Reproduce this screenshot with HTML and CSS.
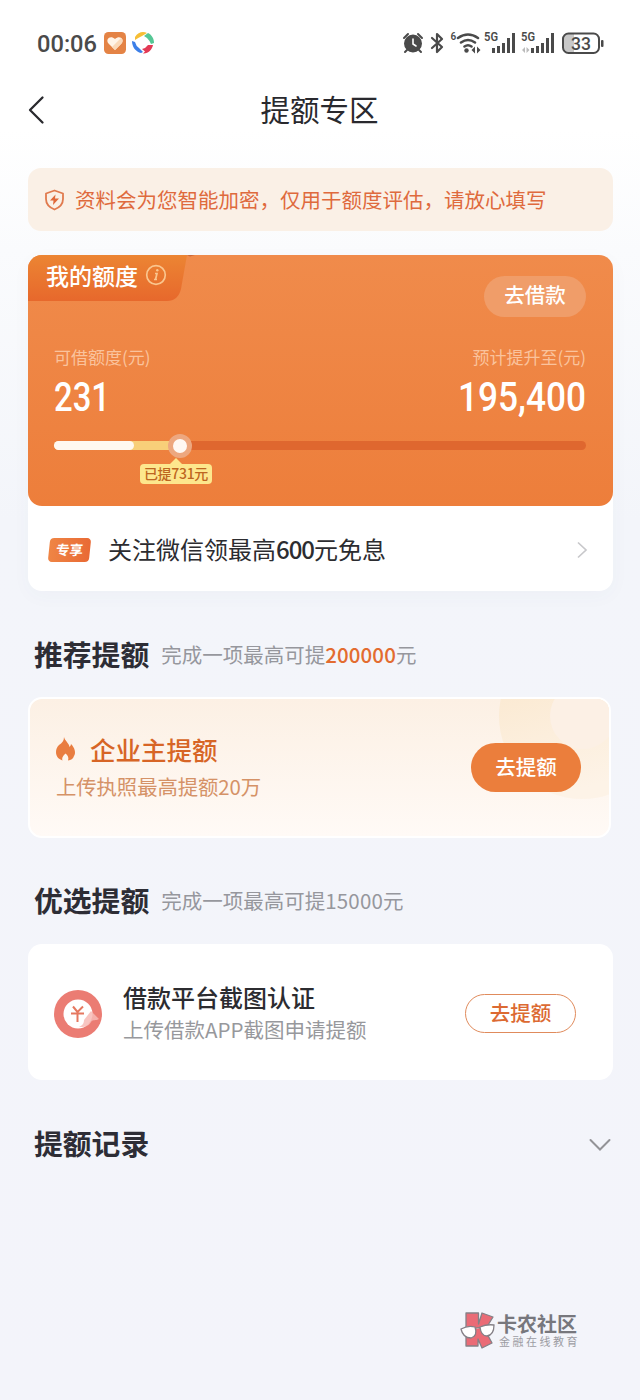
FILE: index.html
```html
<!DOCTYPE html>
<html lang="zh-CN">
<head>
<meta charset="utf-8">
<title>提额专区</title>
<link rel="stylesheet" href="styles.css">
</head>
<body>
<div class="page">
  <div class="status">
    <span class="clock"><svg width="62" height="30"><text x="0" y="24" textLength="60" lengthAdjust="spacingAndGlyphs">00:06</text></svg></span>
    <svg class="app-heart" width="22" height="22" viewBox="0 0 22 22"><rect width="22" height="22" rx="4.5" fill="#e48345"/><path d="M11 18 4.500 11.500C1 7 6.500 2.500 11 7c4.500-4.500 10 0 6.500 4.500z" fill="#fff4e7"/><path d="M11 18 8 15l9-9c2 1 2 4 .5 5.500z" fill="#fbd9b8"/></svg>
    <svg class="app-ring" width="24" height="24" viewBox="0 0 24 24"><path d="M4 6C7 1 12 0 16 2L11 5Q7 7 4 9z" fill="#f6be35"/><path d="M17 2c4 2 6 6 6 10l-3 1q-1-3-4-6l-3-2z" fill="#55c795"/><path d="M1 10l3 1q1 4 4 6l4 4-2 1C5 21 1 16 1 10z" fill="#3c7fe8"/><path d="M11 18q4-1 6-4l5 0c-1 5-5 9-10 8.500l2-2z" fill="#e33a55"/></svg>
    <svg class="sysicons" width="204" height="26" viewBox="0 0 204 26">
      <g fill="none" stroke="#4a4a4a" stroke-width="2" stroke-linecap="round">
        <circle cx="11" cy="13.500" r="8" fill="#4a4a4a"/><path d="M2 8l4-4M20 8l-4-4M5 20l-2 2M17 20l2 2"/>
        <path d="M11 9v5l3 2" stroke="#fff" stroke-width="1.600"/>
        <path d="M30 8l10 9-5 5V4l5 5-10 9" stroke-width="2.200" stroke-linejoin="round"/>
        <path d="M56 8q10-7 20 0M59 12.500q7-5 14 0M62.500 16.500q3.500-2.500 7 0" stroke-width="2.500"/>
      </g>
      <g fill="#4a4a4a">
        <circle cx="64.500" cy="20.500" r="2.200"/><path d="M73 16.500v7l-3.500-3.500zM75 16.500v7l3.500-3.500z"/>
        <path d="M90 18h3v5h-3zM95 16h3v7h-3zM100 13h3v10h-3zM105 8h3v15h-3zM110 3h3v20h-3z"/>
        <path d="M129 18h3v5h-3zM134 16h3v7h-3zM139 13h3v10h-3zM144 8h3v15h-3zM149 3h3v20h-3z"/>
        <path d="M123 17v6l-3-3zM124.500 17v6l3-3z" fill="#bbb"/>
        <rect x="199" y="10" width="2.500" height="7" rx="1"/>
      </g>
      <path d="M167 4h5v19h-5q-5 0-5-5V9q0-5 5-5z" fill="#c8c8c8"/>
      <rect x="161" y="3.500" width="36" height="19.500" rx="5.500" fill="none" stroke="#4a4a4a" stroke-width="2"/>
      <g class="sys-text"><text x="48.500" y="10" font-size="10">6</text><text x="82" y="11" font-size="12" textLength="14" lengthAdjust="spacingAndGlyphs">5G</text><text x="119" y="11" font-size="12" textLength="14" lengthAdjust="spacingAndGlyphs">5G</text><text x="169" y="19.500" font-size="18" font-weight="500" textLength="20" lengthAdjust="spacingAndGlyphs">33</text></g>
    </svg>
  </div>

  <header class="nav">
    <svg class="back" width="18" height="30" viewBox="0 0 18 30"><path d="M14.500 2.500 2 15 14.500 27.500" fill="none" stroke="#2a2a2e" stroke-width="2.300" stroke-linecap="round" stroke-linejoin="round"/></svg>
    <h1>提额专区</h1>
  </header>

  <div class="notice">
    <svg width="21" height="22" viewBox="0 0 21 22"><path d="M10.500 1.500 19 4.500V10c0 5-3.500 8.500-8.500 10.500C5.500 18.500 2 15 2 10V4.500z" fill="none" stroke="#e07a4e" stroke-width="1.800" stroke-linejoin="round"/><path d="M11.500 5.500 6 11.500h3.500L9 16l6-6.500h-4z" fill="#e0693a"/></svg>
    <span>资料会为您智能加密，仅用于额度评估，请放心填写</span>
  </div>

  <section class="quota">
    <div class="quota-card">
      <svg class="tab-shape" width="168" height="46" viewBox="0 0 168 46"><defs><linearGradient id="tab" x2="0" y2="1"><stop stop-color="#ec8533"/><stop offset="1" stop-color="#e7682c"/></linearGradient></defs><path d="M0 0H160L154 34Q151 46 140 46H0z" fill="url(#tab)"/><path d="M160 0h8l-5 1.500z" fill="#cd6836"/></svg>
      <div class="tab-label">我的额度
        <svg width="22" height="22" viewBox="0 0 22 22"><circle cx="11" cy="11" r="9.300" fill="none" stroke="#fac68e" stroke-width="1.700"/><path d="M10 9.500h2l-1.500 6M9 15.500h3" fill="none" stroke="#fac68e" stroke-width="1.700"/><circle cx="12.300" cy="6.300" r="1.200" fill="#fac68e"/></svg>
      </div>
      <div class="borrow">去借款</div>
      <div class="amounts">
        <div><p>可借额度(元)</p><svg width="60" height="52"><text x="0" y="41" textLength="56" lengthAdjust="spacingAndGlyphs">231</text></svg></div>
        <div class="right"><p>预计提升至(元)</p><svg width="130" height="52"><text x="2" y="41" textLength="128" lengthAdjust="spacingAndGlyphs">195,400</text></svg></div>
      </div>
      <div class="track"><div class="raised"></div><div class="base"></div><div class="thumb"></div><div class="tip">已提731元</div></div>
    </div>
    <div class="wechat">
      <span class="tag"><b>专享</b></span>
      <span class="wechat-text">关注微信领最高<i>600</i>元免息</span>
      <svg width="12" height="18" viewBox="0 0 12 18"><path d="M2 1.500 10 9l-8 7.500" fill="none" stroke="#c8c8cb" stroke-width="1.700"/></svg>
    </div>
  </section>

  <div class="heading"><h2>推荐提额</h2><p>完成一项最高可提<em>200000</em>元</p></div>

  <section class="owner">
    <svg class="rings" width="112" height="101" viewBox="0 0 112 101"><defs><linearGradient id="ring" x2="0.300" y2="1"><stop stop-color="#fae5c8"/><stop offset="1" stop-color="#fdf3e7"/></linearGradient></defs><circle cx="83" cy="17" r="83" fill="url(#ring)"/><circle cx="84" cy="17" r="33" fill="#fcf0e5"/></svg>
    <div class="owner-text">
      <div class="owner-title">
        <svg width="22" height="24" viewBox="0 0 22 24"><path d="M9 0c1 4 5 6 5.500 10 1-1 1.500-2 1.500-3 4 4 5 9 3 12-1 3-3 4-6 4.500 1-3 0-5-2.500-7-2 2-4 4-3 7C3 22 1 19 1 15c0-3 1-5 3-7C7 6 9 4 9 0z" fill="#e97d40"/></svg>
        <span>企业主提额</span>
      </div>
      <p>上传执照最高提额20万</p>
    </div>
    <div class="btn-solid">去提额</div>
  </section>

  <div class="heading heading-b"><h2>优选提额</h2><p>完成一项最高可提<i>15000</i>元</p></div>

  <section class="platform">
    <svg width="50" height="50" viewBox="0 0 50 50"><circle cx="25" cy="25" r="24" fill="#eb7c73"/><circle cx="25" cy="25" r="14.500" fill="#fff"/><path d="M20 17.500l4.500 5.500 5.500-5.500M18 24.500h13M24.500 23v10" fill="none" stroke="#e57860" stroke-width="2"/><path d="M31 31l7-9 8 8c-3 2-6 0-8 3-3 5-7 5-12 5 4-2 5-4 5-7z" fill="#f7bbb6" opacity=".85"/></svg>
    <div class="platform-text"><h3>借款平台截图认证</h3><p>上传借款APP截图申请提额</p></div>
    <div class="btn-line">去提额</div>
  </section>

  <div class="record"><h2>提额记录</h2><svg width="22" height="14" viewBox="0 0 22 14"><path d="M1.500 2 11 11.500 20.500 2" fill="none" stroke="#939397" stroke-width="2" stroke-linecap="round"/></svg></div>

  <footer class="brand">
    <svg width="36" height="37" viewBox="0 0 36 37"><path d="M6 1h12.500v11L22 1l11 4-8 13 7 13-10 5-4-9v7H6z" fill="#ea6b76" stroke="#858087" stroke-width="1.300" stroke-linejoin="round"/><path d="M1 17q7-4 14-2 3 9-4 11-8 0-10-9zM20 15q7-3 14-2 0 10-7 11-6 0-7-9zM15 17q2-2 5-1" fill="#fff" stroke="#858087" stroke-width="1.300"/></svg>
    <div class="brand-text"><b>卡农社区</b><span>金融在线教育</span></div>
  </footer>
</div>
</body>
</html>
```
FILE: styles.css
```css
* { box-sizing: border-box; }
body, h1, h2, h3, p { margin: 0; }
body { font-family: "Noto Sans CJK SC", sans-serif; color: #2d2d35; }
svg { display: block; flex-shrink: 0; }
i, em { font-style: normal; }
.page {
  height: 1400px;
  overflow: hidden;
  padding: 0 27px 0 28px;
  background: linear-gradient(#fff 0, #fff 130px, #fafbfd 250px, #f3f5fa 520px, #f3f4fa 100%);
  display: flex;
  flex-direction: column;
}
.status { height: 86px; display: flex; align-items: center; padding-left: 9px; flex-shrink: 0; }
.clock text { font: 500 23.5px Roboto, sans-serif; fill: #4a4a4a; }
.app-heart { margin-left: 5px; }
.app-ring { margin-left: 5px; }
.sysicons { margin-left: auto; margin-right: 7px; }
.sys-text { font-family: Roboto, sans-serif; font-weight: 600; fill: #4a4a4a; }

.nav { height: 46px; display: grid; grid-template-columns: 18px 1fr 18px; align-items: center; flex-shrink: 0; }
.nav h1 { text-align: center; font-size: 29.5px; font-weight: 400; line-height: 44px; color: #29292e; padding-bottom: 3px; margin-left: -2px; }

.notice { margin-top: 36px; height: 63px; border-radius: 13px; background: #faf0e6; display: flex; align-items: center; gap: 10px; padding-left: 16px; font-size: 20.5px; line-height: 30px; color: #df6a3d; white-space: nowrap; flex-shrink: 0; }
.notice span { padding-bottom: 2px; }

.quota { margin-top: 24px; height: 336px; border-radius: 14px; background: #fff; box-shadow: 0 5px 20px rgba(70, 80, 120, .03); flex-shrink: 0; }
.quota-card { position: relative; height: 251px; border-radius: 14px; background: linear-gradient(#f08b4b, #ed7e3b); color: #fff; overflow: hidden; padding: 21px 27px 0 26px; }
.tab-shape { position: absolute; left: -1px; top: 0; }
.tab-label { position: absolute; left: 18px; top: 3px; display: flex; align-items: center; gap: 7px; font-size: 23px; font-weight: 500; line-height: 34px; }
.borrow { width: 102px; height: 41px; margin-left: auto; border-radius: 21px; background: #f09d69; font-size: 20.5px; line-height: 36px; text-align: center; font-weight: 500; }
.amounts { display: flex; justify-content: space-between; margin-top: 28px; }
.amounts p { font-size: 17px; line-height: 24px; height: 26px; color: #fac39d; }
.amounts .right { display: flex; flex-direction: column; align-items: flex-end; }
.amounts text { font: 500 41px Roboto, sans-serif; fill: #fff; }
.amounts svg { margin-top: -1px; }
.track { position: relative; margin-top: 19px; height: 9px; border-radius: 5px; background: #df672f; }
.raised { position: absolute; left: 0; top: 0; width: 126px; height: 9px; border-radius: 5px; background: #f8cf79; }
.base { position: absolute; left: 0; top: 0; width: 80px; height: 9px; border-radius: 5px; background: #fff8f0; }
.thumb { position: absolute; left: 114px; top: -7px; width: 24px; height: 24px; border-radius: 50%; border: 5px solid #eda77f; background: #fff8f3; }
.tip { position: absolute; left: 86px; top: 23px; width: 72px; height: 20px; border-radius: 4px; background: #fde78d; color: #bd6520; font-size: 14px; font-weight: 500; line-height: 19px; text-align: center; white-space: nowrap; letter-spacing: -.3px; }
.tip::before { content: ""; position: absolute; left: 29px; top: -6px; border: 7px solid transparent; border-top: 0; border-bottom-color: #fde78d; }

.wechat { height: 85px; display: flex; align-items: center; padding: 2px 25px 0 21px; }
.tag { width: 41px; height: 24px; border-radius: 4px; background: linear-gradient(90deg, #ef8545, #e96a34); transform: skewX(-6deg); color: #fff; font-size: 13.5px; line-height: 23px; text-align: center; }
.tag b { display: block; font-weight: 700; }
.wechat-text { margin-left: 18px; padding-bottom: 2px; font-size: 24px; line-height: 36px; color: #2c2c30; }
.wechat-text i { letter-spacing: -1px; font-weight: 500; }
.wechat svg { margin-left: auto; }

.heading { display: flex; align-items: center; height: 44px; margin-top: 41px; padding-left: 6px; flex-shrink: 0; }
h2 { font-size: 28.8px; line-height: 44px; font-weight: 700; }
.heading p { margin-left: 12px; font-size: 20.5px; line-height: 30px; padding-bottom: 1px; color: #96979d; }
.heading em { font-weight: 500; color: #e36c30; letter-spacing: .1px; }
.heading i { letter-spacing: .2px; }

.owner { position: relative; margin-top: 21px; margin-right: 2px; height: 141px; border: 2px solid #fff; border-radius: 14px; background: linear-gradient(#fcf0e4, #fffaf6); overflow: hidden; display: flex; justify-content: space-between; padding: 0 28px 0 25px; flex-shrink: 0; }
.rings { position: absolute; right: -2px; top: 0; }
.owner-text { padding-top: 31px; }
.owner-title { display: flex; align-items: center; gap: 13px; font-size: 25.5px; line-height: 38px; font-weight: 500; color: #d76526; }
.owner-text p { margin-left: 1px; margin-top: 3px; font-size: 20.4px; line-height: 30px; letter-spacing: -.1px; color: #d59267; }
.btn-solid { position: relative; margin-top: 44px; width: 110px; height: 49px; border-radius: 25px; background: #eb7e3c; color: #fff; font-size: 20.5px; line-height: 46px; font-weight: 500; text-align: center; }

.heading-b { margin-top: 40px; }
.platform { margin-top: 22px; height: 136px; border-radius: 14px; background: #fff; display: flex; align-items: center; padding: 3px 37px 0 25px; flex-shrink: 0; }
.platform-text { margin-left: 20px; padding-bottom: 3px; }
h3 { font-size: 24px; line-height: 34px; font-weight: 500; color: #2c2c30; }
.platform-text p { font-size: 20.5px; line-height: 30px; color: #97989c; }
.btn-line { margin-left: auto; width: 111px; height: 39px; border: 1px solid #e08b5c; border-radius: 20px; color: #dc6a32; font-size: 20.5px; line-height: 35px; font-weight: 500; text-align: center; }

.record { display: flex; align-items: center; justify-content: space-between; margin-top: 41px; padding: 0 2px 0 6px; height: 44px; flex-shrink: 0; }
.record svg { margin-top: 4px; }
.brand { display: flex; margin-top: auto; margin-bottom: 51px; margin-left: 432px; height: 37px; gap: 1px; }
.brand-text { display: flex; flex-direction: column; white-space: nowrap; }
.brand b { font-size: 20px; line-height: 23px; color: #77777d; }
.brand span { margin-left: 2px; font-size: 11px; line-height: 13px; letter-spacing: 2.500px; color: #9c9ca3; }
```
